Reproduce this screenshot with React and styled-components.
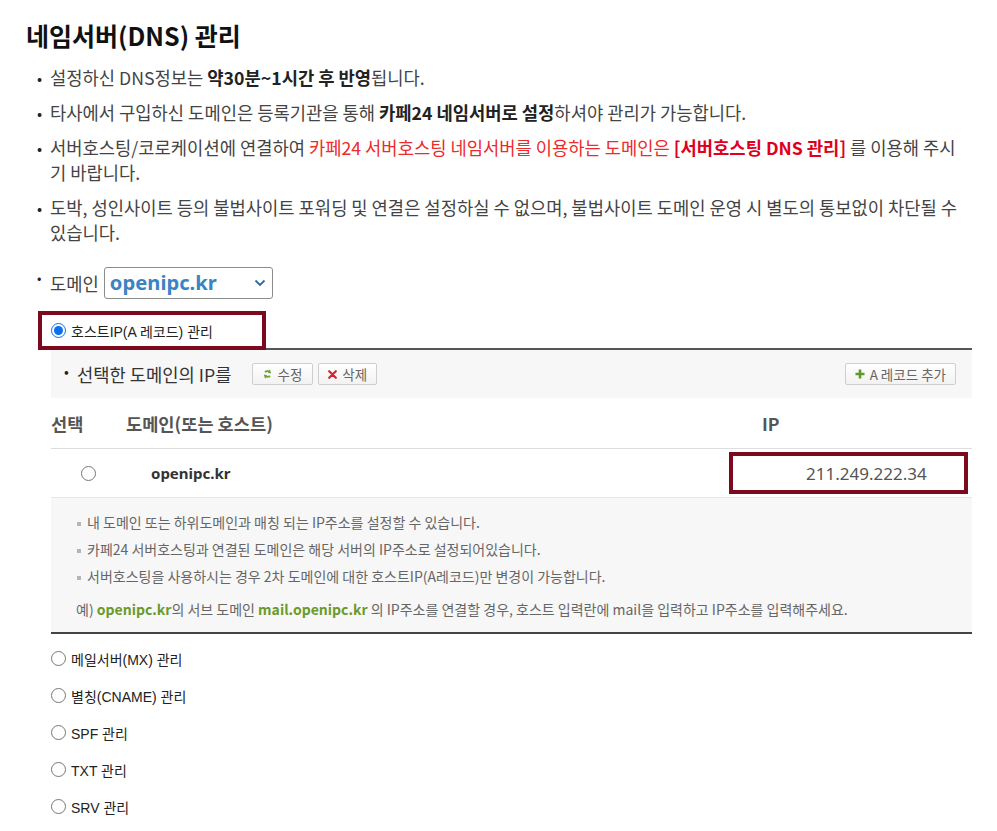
import React from 'react';
import styled, { createGlobalStyle } from 'styled-components';

const GlobalStyle = createGlobalStyle`
  html, body {
    margin: 0;
    padding: 0;
    background: #fff;
  }
  body {
    font-family: "Noto Sans CJK KR", "Noto Sans", sans-serif;
    color: #444;
  }
  * { box-sizing: border-box; }
`;

const Page = styled.div`
  padding: 18px 25px 20px 26px;
`;

const Title = styled.h2`
  margin: 0;
  font-size: 25px;
  line-height: 34px;
  font-weight: 700;
  color: #111;
`;

const NoticeList = styled.ul`
  list-style: none;
  margin: 13px 8px 0 0;
  padding: 0 0 0 11px;
`;

const Notice = styled.li`
  display: flex;
  font-size: 17.7px;
  line-height: 25px;
  color: #444;
  margin-bottom: 10px;
  &:last-child { margin-bottom: 0; }
  b { color: #222; }
`;

const Bullet = styled.span`
  flex: none;
  width: 13px;
  color: #222;
  font-size: ${p => p.$size || 15}px;
`;

const NoticeText = styled.span`
  flex: 1;
  min-width: 0;
`;

const Red = styled.span`
  color: ${p => (p.$strong ? '#e0001b' : '#ee2a2a')};
  font-weight: ${p => (p.$strong ? 700 : 400)};
`;

const DomainRow = styled.div`
  display: flex;
  align-items: center;
  margin-top: 22px;
  padding-left: 11px;
`;

const SmallDot = styled.span`
  align-self: flex-start;
  width: 13px;
  font-size: 13px;
  line-height: 14px;
  margin-top: 4px;
  color: #222;
`;

const Label = styled.span`
  font-size: 17.7px;
  color: #444;
  margin-right: 5px;
`;

const SelectWrap = styled.div`
  position: relative;
  width: 169px;
  height: 32px;
`;

const Select = styled.select`
  appearance: none;
  width: 100%;
  height: 100%;
  border: 1px solid #8c8c8c;
  border-radius: 3px;
  background: #fff;
  padding: 0 0 2px 5px;
  font-family: "Noto Sans", "Noto Sans CJK KR", sans-serif;
  font-size: 20.2px;
  font-weight: 700;
  color: #3a84c4;
  outline: none;
`;

const Chevron = styled.svg`
  position: absolute;
  right: 7px;
  top: 12px;
  pointer-events: none;
`;

const HighlightRadio = styled.label`
  position: relative;
  z-index: 1;
  display: flex;
  align-items: center;
  gap: 5px;
  width: 228px;
  height: 39px;
  margin: 12px 0 -2px 12px;
  padding-left: 9px;
  border: 4px solid #7b0a1e;
  background: #fff;
  font-family: "Liberation Sans", "Noto Sans CJK KR", sans-serif;
  font-size: 14px;
  color: #222;
`;

const Radio = styled.input.attrs({ type: 'radio' })`
  margin: 0;
  width: 15px;
  height: 15px;
  accent-color: #0a6ff0;
  flex: none;
`;

const Panel = styled.div`
  margin-left: 25px;
  border-top: 2px solid #555;
`;

const Toolbar = styled.div`
  display: flex;
  align-items: center;
  height: 48px;
  background: #f7f7f7;
  padding: 0 16px 0 13px;
`;

const ToolbarText = styled.span`
  display: flex;
  font-size: 17.7px;
  color: #333;
`;

const ButtonGroup = styled.div`
  display: flex;
  gap: 5px;
  margin-left: 21px;
`;

const Button = styled.button`
  display: inline-flex;
  align-items: center;
  gap: 5px;
  height: 22px;
  padding: 0 ${p => (p.$wide ? 9 : 10)}px;
  margin-left: ${p => (p.$push ? 'auto' : '0')};
  border: 1px solid #cfcfcf;
  border-radius: 2px;
  background: linear-gradient(#ffffff, #f2f2f2);
  font-family: "Noto Sans CJK KR", sans-serif;
  font-size: 13.5px;
  color: #666;
  cursor: pointer;
`;

const RecordGrid = styled.div`
  display: grid;
  grid-template-columns: 75px 1fr 243px;
  align-items: center;
  height: ${p => (p.$head ? 51 : 49)}px;
  border-bottom: 1px solid ${p => (p.$head ? '#dddddd' : '#e6e6e6')};
  background: #fff;
`;

const HeadCell = styled.div`
  font-size: 17.6px;
  font-weight: 700;
  color: #555;
  padding-left: ${p => p.$pad || 0}px;
`;

const Cell = styled.div`
  display: flex;
  align-items: center;
  justify-content: ${p => (p.$center ? 'center' : 'flex-start')};
  padding-left: ${p => p.$pad || 0}px;
  font-family: "Noto Sans", "Noto Sans CJK KR", sans-serif;
  font-size: ${p => (p.$bold ? 15 : 17)}px;
  font-weight: ${p => (p.$bold ? 700 : 400)};
  color: ${p => (p.$bold ? '#333' : '#555')};
`;

const IpBox = styled.div`
  display: flex;
  align-items: center;
  width: 239px;
  height: 42px;
  padding-left: 73px;
  border: 4px solid #7b0a1e;
`;

const InfoBox = styled.div`
  background: #f7f7f7;
  border-bottom: 2px solid #444;
  padding: 11px 25px 9px;
`;

const InfoList = styled.ul`
  list-style: none;
  margin: 0;
  padding: 0;
`;

const InfoItem = styled.li`
  font-size: 14px;
  line-height: 27px;
  color: #666;
  &::before {
    content: "";
    display: inline-block;
    width: 4px;
    height: 4px;
    margin: 0 6px 0 1px;
    vertical-align: middle;
    background: #b5b5b5;
  }
`;

const Example = styled.p`
  margin: 6px 0 0;
  font-size: 14px;
  line-height: 27px;
  color: #666;
`;

const Green = styled.b`
  color: #6b9a2c;
`;

const TypeList = styled.div`
  margin-top: 6px;
  padding-left: 25px;
`;

const TypeOption = styled.label`
  display: flex;
  align-items: center;
  gap: 5px;
  height: 37px;
  font-family: "Liberation Sans", "Noto Sans CJK KR", sans-serif;
  font-size: 14px;
  color: #222;
`;

const RefreshIcon = () => (
  <svg width="9" height="12" viewBox="0 0 9 12">
    <path d="M2 4.2 A3.2 3.2 0 0 1 7.3 4.8" fill="none" stroke="#6aa52e" strokeWidth="1.8" />
    <path d="M7 1.2 L7.9 5.6 L4.6 4.6 Z" fill="#6aa52e" />
    <path d="M7 7.8 A3.2 3.2 0 0 1 1.7 7.2" fill="none" stroke="#6aa52e" strokeWidth="1.8" />
    <path d="M2 10.8 L1.1 6.4 L4.4 7.4 Z" fill="#6aa52e" />
  </svg>
);

const CloseIcon = () => (
  <svg width="9" height="9" viewBox="0 0 9 9">
    <path d="M1.2 1.2 L7.8 7.8 M7.8 1.2 L1.2 7.8" stroke="#d8232a" strokeWidth="2.2" strokeLinecap="round" />
  </svg>
);

const PlusIcon = () => (
  <svg width="10" height="10" viewBox="0 0 10 10">
    <path d="M5 0.5 V9.5 M0.5 5 H9.5" stroke="#5f9a26" strokeWidth="2.6" />
  </svg>
);

const types = ['메일서버(MX) 관리', '별칭(CNAME) 관리', 'SPF 관리', 'TXT 관리', 'SRV 관리'];

const App = () => {
  return (
    <React.Fragment>
      <GlobalStyle />
      <Page>
        <Title>네임서버(DNS) 관리</Title>
        <NoticeList>
          <Notice>
            <Bullet>•</Bullet>
            <NoticeText>설정하신 DNS정보는 <b>약30분~1시간 후 반영</b>됩니다.</NoticeText>
          </Notice>
          <Notice>
            <Bullet>•</Bullet>
            <NoticeText>타사에서 구입하신 도메인은 등록기관을 통해 <b>카페24 네임서버로 설정</b>하셔야 관리가 가능합니다.</NoticeText>
          </Notice>
          <Notice>
            <Bullet>•</Bullet>
            <NoticeText>
              서버호스팅/코로케이션에 연결하여 <Red>카페24 서버호스팅 네임서버를 이용하는 도메인은 </Red>
              <Red $strong>[서버호스팅 DNS 관리]</Red> 를 이용해 주시기 바랍니다.
            </NoticeText>
          </Notice>
          <Notice>
            <Bullet>•</Bullet>
            <NoticeText>도박, 성인사이트 등의 불법사이트 포워딩 및 연결은 설정하실 수 없으며, 불법사이트 도메인 운영 시 별도의 통보없이 차단될 수 있습니다.</NoticeText>
          </Notice>
        </NoticeList>

        <DomainRow>
          <SmallDot>•</SmallDot>
          <Label>도메인</Label>
          <SelectWrap>
            <Select defaultValue="openipc.kr">
              <option value="openipc.kr">openipc.kr</option>
            </Select>
            <Chevron width="12" height="8" viewBox="0 0 12 8">
              <path d="M1.5 1.5 L6 6 L10.5 1.5" fill="none" stroke="#2f69a6" strokeWidth="1.8" />
            </Chevron>
          </SelectWrap>
        </DomainRow>

        <HighlightRadio>
          <Radio name="type" defaultChecked />
          호스트IP(A 레코드) 관리
        </HighlightRadio>

        <Panel>
          <Toolbar>
            <ToolbarText><Bullet $size={14}>•</Bullet>선택한 도메인의 IP를</ToolbarText>
            <ButtonGroup>
              <Button><RefreshIcon />수정</Button>
              <Button $wide><CloseIcon />삭제</Button>
            </ButtonGroup>
            <Button $push $wide><PlusIcon />A 레코드 추가</Button>
          </Toolbar>

          <RecordGrid $head>
            <HeadCell>선택</HeadCell>
            <HeadCell>도메인(또는 호스트)</HeadCell>
            <HeadCell $pad={33}>IP</HeadCell>
          </RecordGrid>

          <RecordGrid>
            <Cell $center><Radio name="record" /></Cell>
            <Cell $bold $pad={25}>openipc.kr</Cell>
            <Cell><IpBox>211.249.222.34</IpBox></Cell>
          </RecordGrid>

          <InfoBox>
            <InfoList>
              <InfoItem>내 도메인 또는 하위도메인과 매칭 되는 IP주소를 설정할 수 있습니다.</InfoItem>
              <InfoItem>카페24 서버호스팅과 연결된 도메인은 해당 서버의 IP주소로 설정되어있습니다.</InfoItem>
              <InfoItem>서버호스팅을 사용하시는 경우 2차 도메인에 대한 호스트IP(A레코드)만 변경이 가능합니다.</InfoItem>
            </InfoList>
            <Example>
              예) <Green>openipc.kr</Green>의 서브 도메인 <Green>mail.openipc.kr</Green> 의 IP주소를 연결할 경우, 호스트 입력란에 mail을 입력하고 IP주소를 입력해주세요.
            </Example>
          </InfoBox>
        </Panel>

        <TypeList>
          {types.map(t => (
            <TypeOption key={t}>
              <Radio name="type" />
              {t}
            </TypeOption>
          ))}
        </TypeList>
      </Page>
    </React.Fragment>
  );
};

export default App;
